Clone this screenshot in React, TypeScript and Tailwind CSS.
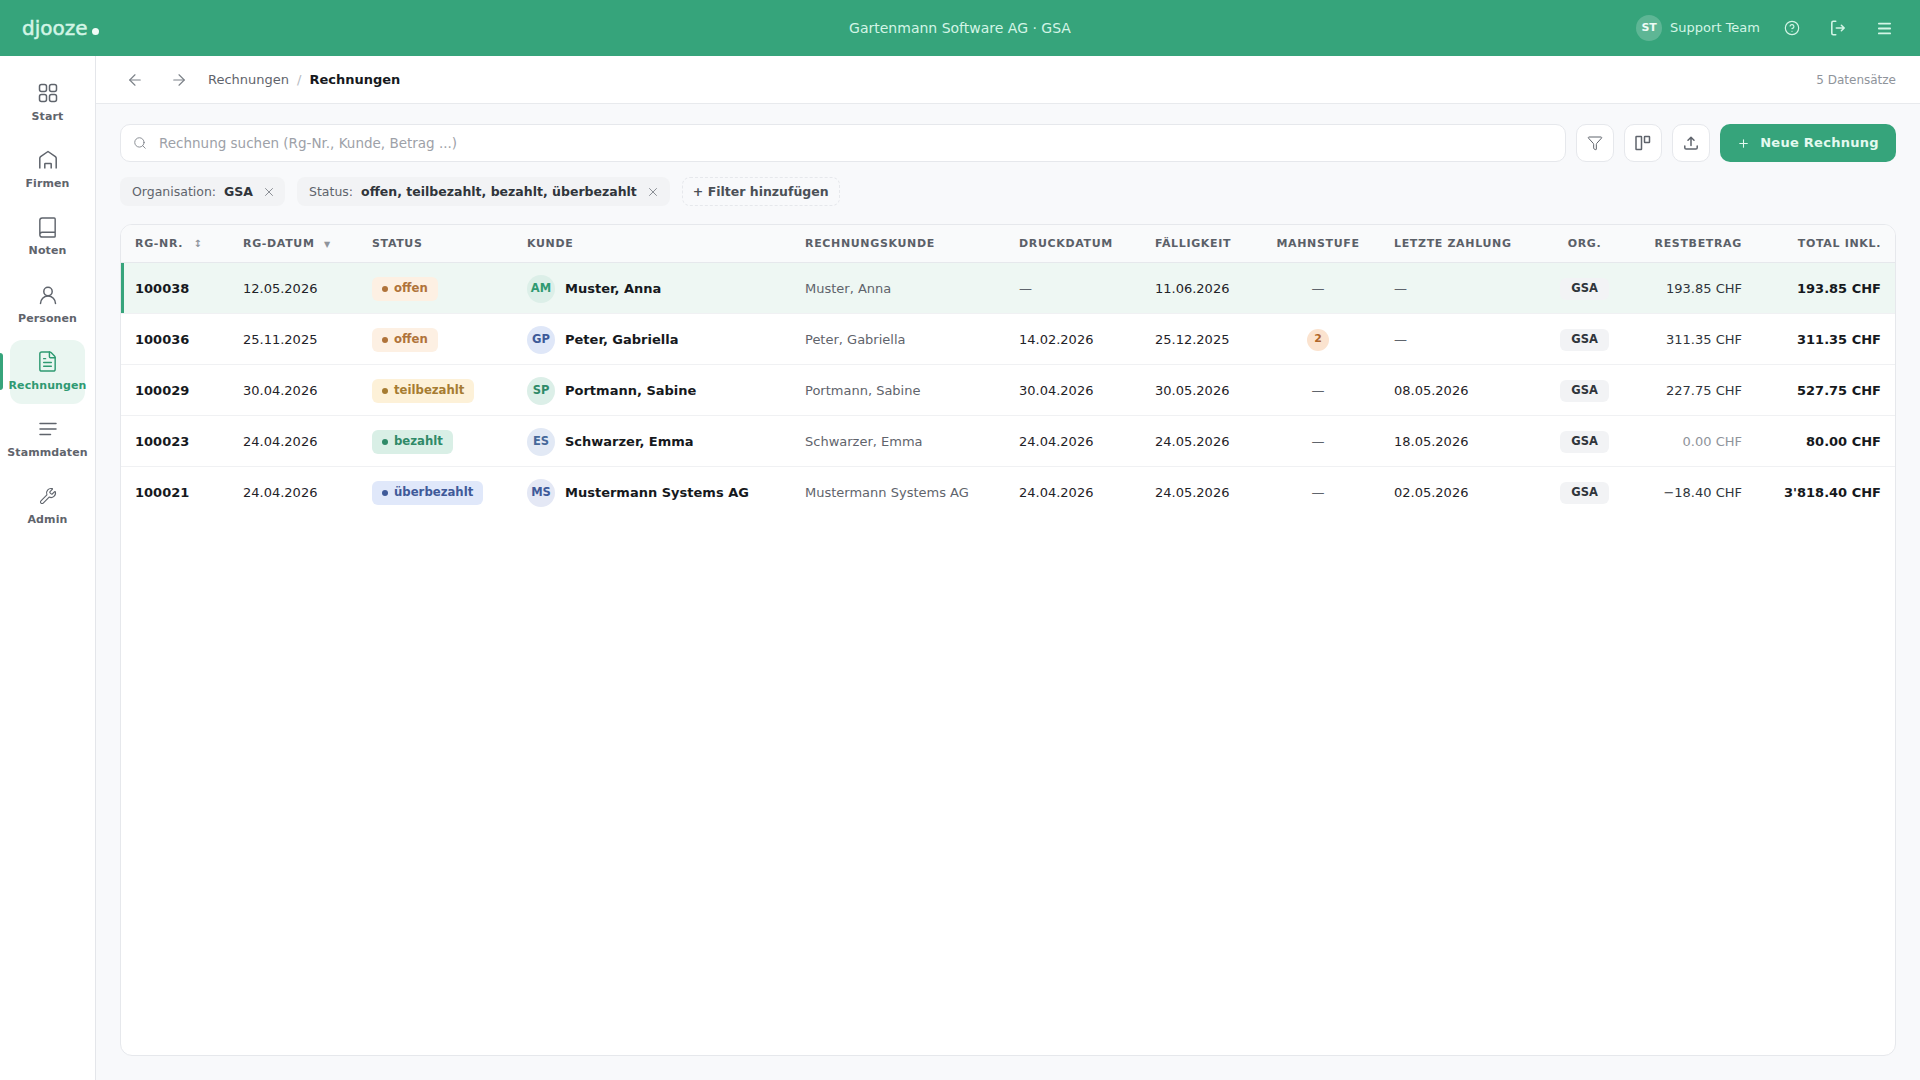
import { ArrowLeft, ArrowRight, Book, CircleHelp, FileText, Funnel, Menu, Plus, Search, Wrench, X } from "lucide-react";

const font = "[font-family:'DejaVu_Sans',sans-serif]";

const rows = [
    { nr: '100038', datum: '12.05.2026', status: 'offen', initials: 'AM', avatar: 'bg-[#dcefe8] text-[#2f9a72]', kunde: 'Muster, Anna', druck: '—', faellig: '11.06.2026', mahn: '', zahlung: '—', rest: '193.85 CHF', total: '193.85 CHF' },
    { nr: '100036', datum: '25.11.2025', status: 'offen', initials: 'GP', avatar: 'bg-[#dfe7f8] text-[#3d5a99]', kunde: 'Peter, Gabriella', druck: '14.02.2026', faellig: '25.12.2025', mahn: '2', zahlung: '—', rest: '311.35 CHF', total: '311.35 CHF' },
    { nr: '100029', datum: '30.04.2026', status: 'teilbezahlt', initials: 'SP', avatar: 'bg-[#dcefe8] text-[#2f8a68]', kunde: 'Portmann, Sabine', druck: '30.04.2026', faellig: '30.05.2026', mahn: '', zahlung: '08.05.2026', rest: '227.75 CHF', total: '527.75 CHF' },
    { nr: '100023', datum: '24.04.2026', status: 'bezahlt', initials: 'ES', avatar: 'bg-[#e2e9f5] text-[#46689a]', kunde: 'Schwarzer, Emma', druck: '24.04.2026', faellig: '24.05.2026', mahn: '', zahlung: '18.05.2026', rest: '0.00 CHF', total: '80.00 CHF' },
    { nr: '100021', datum: '24.04.2026', status: 'überbezahlt', initials: 'MS', avatar: 'bg-[#e4e8f5] text-[#3f5a99]', kunde: 'Mustermann Systems AG', druck: '24.04.2026', faellig: '24.05.2026', mahn: '', zahlung: '02.05.2026', rest: '−18.40 CHF', total: "3'818.40 CHF" },
];

const statusStyles: Record<string, { pill: string; dot: string }> = {
    offen: { pill: 'bg-[#fdf0e3] text-[#b0733a]', dot: 'bg-[#b0733a]' },
    teilbezahlt: { pill: 'bg-[#fdf1d8] text-[#a67c32]', dot: 'bg-[#a67c32]' },
    bezahlt: { pill: 'bg-[#d9efe6] text-[#2f8a68]', dot: 'bg-[#2f8a68]' },
    überbezahlt: { pill: 'bg-[#e0e8fa] text-[#3f5a99]', dot: 'bg-[#3f5a99]' },
};

function GridIcon() {
    return (
        <svg width="22" height="22" viewBox="0 0 22 22" fill="none" stroke="currentColor" strokeWidth="1.5">
            <rect x="2.5" y="2.5" width="7" height="7" rx="2" />
            <rect x="12.5" y="2.5" width="7" height="7" rx="2" />
            <rect x="2.5" y="12.5" width="7" height="7" rx="2" />
            <rect x="12.5" y="12.5" width="7" height="7" rx="2" />
        </svg>
    );
}

function HouseIcon() {
    return (
        <svg width="22" height="22" viewBox="0 0 22 22" fill="none" stroke="currentColor" strokeWidth="1.5" strokeLinejoin="round">
            <path d="M2.8 19.5V9.2c0-.6.3-1.1.8-1.5L11 2.5l7.4 5.2c.5.4.8.9.8 1.5v10.3" />
            <path d="M7.8 19.5V15c0-.3.2-.5.5-.5h5.4c.3 0 .5.2.5.5v4.5" />
        </svg>
    );
}

function PersonIcon() {
    return (
        <svg width="22" height="22" viewBox="0 0 22 22" fill="none" stroke="currentColor" strokeWidth="1.5" strokeLinecap="round">
            <circle cx="11" cy="7.5" r="4.2" />
            <path d="M3.5 19.5c0-4.200 3.300-7.500 7.500-7.500s7.500 3.300 7.500 7.500" />
        </svg>
    );
}

function LinesIcon() {
    return (
        <svg width="22" height="22" viewBox="0 0 22 22" fill="none" stroke="currentColor" strokeWidth="1.5" strokeLinecap="round">
            <path d="M3 5.5h16M3 11h16M3 16.5h10.5" />
        </svg>
    );
}

function ColumnsIcon() {
    return (
        <svg width="18" height="18" viewBox="0 0 18 18" fill="none" stroke="currentColor" strokeWidth="1.5">
            <rect x="2" y="2.5" width="5.5" height="13" rx=".5" />
            <rect x="10.5" y="2.5" width="5" height="6" rx=".5" />
        </svg>
    );
}

function UploadIcon() {
    return (
        <svg width="16" height="16" viewBox="0 0 16 16" fill="none" stroke="currentColor" strokeWidth="1.5" strokeLinecap="round" strokeLinejoin="round">
            <path d="M8 10.5V2.5M5 5.2l3-2.900 3 2.900" />
            <path d="M1.8 11v1.700c0 .8.5 1.300 1.300 1.300h9.800c.8 0 1.300-.5 1.300-1.300V11" />
        </svg>
    );
}

function LogoutIcon() {
    return (
        <svg width="18" height="18" viewBox="0 0 16 16" fill="none" stroke="currentColor" strokeWidth="1.4" strokeLinecap="round" strokeLinejoin="round">
            <path d="M6 2H3.800C3 2 2.500 2.500 2.500 3.300v9.400c0 .8.500 1.300 1.300 1.300H6" />
            <path d="M6.500 8h7M11 5.600 13.500 8 11 10.400" />
        </svg>
    );
}

const navItems = [
    { label: 'Start', icon: <GridIcon /> },
    { label: 'Firmen', icon: <HouseIcon /> },
    { label: 'Noten', icon: <Book size={23} strokeWidth={1.5} /> },
    { label: 'Personen', icon: <PersonIcon /> },
    { label: 'Rechnungen', icon: <FileText size={23} strokeWidth={1.5} />, active: true },
    { label: 'Stammdaten', icon: <LinesIcon /> },
    { label: 'Admin', icon: <Wrench size={18} strokeWidth={1.5} /> },
];

const th = "px-[14px] pt-[2px] text-[11px] font-bold uppercase tracking-[0.06em] text-[#5b6068] whitespace-nowrap";
const td = "px-[14px] pt-[2px] whitespace-nowrap";

export default function App() {
    return (
        <div className={`${font} flex h-[1080px] w-[1920px] flex-col overflow-hidden bg-[#f8f9fb] text-[13px] text-[#1f2328]`}>
            <header className="flex h-[56px] shrink-0 items-center justify-between bg-[#36a47b] pl-[22px] pr-[27px] text-[#d3f5e6]">
                <div className="flex w-[400px] items-baseline text-[20px] leading-none [-webkit-text-stroke:0.5px_#d3f5e6]">
                    djooze<span className="ml-[4px] inline-block h-[7px] w-[7px] rounded-full bg-[#f2fbf7]"></span>
                </div>
                <div className="text-[14px]">Gartenmann Software AG · GSA</div>
                <div className="flex w-[395px] items-center justify-end">
                    <span className="flex h-[26px] w-[26px] items-center justify-center rounded-full bg-white/20 text-[11px] font-bold text-[#eefbf5]">ST</span>
                    <span className="ml-2 text-[13px]">Support Team</span>
                    <CircleHelp size={16} strokeWidth={1.75} className="ml-[24px]" />
                    <span className="ml-[29px]"><LogoutIcon /></span>
                    <Menu size={17} strokeWidth={2.5} className="ml-[29px]" />
                </div>
            </header>

            <div className="flex min-h-0 flex-1">
                <nav className="flex w-[96px] shrink-0 flex-col items-center border-r border-[#e4e6ea] bg-white pt-[15px] text-[#5f646c]">
                    {navItems.map((item) => (
                        <div key={item.label} className="relative flex h-[67.2px] w-full justify-center">
                            {item.active && <span className="absolute left-0 top-[13px] h-[37px] w-[3px] rounded-r-[3px] bg-[#36a47b]"></span>}
                            <div className={`flex h-[64px] w-[75px] flex-col items-center justify-center gap-[6px] rounded-[12px] ${item.active ? 'bg-[#eaf6f1] text-[#2f9a72]' : ''}`}>
                                <span className="flex h-[22px] items-center">{item.icon}</span>
                                <span className="text-[11px] font-bold leading-[14px] tracking-[0.01em] whitespace-nowrap">{item.label}</span>
                            </div>
                        </div>
                    ))}
                </nav>

                <main className="flex min-w-0 flex-1 flex-col">
                    <div className="flex h-[48px] shrink-0 items-center justify-between border-b border-[#e8eaed] bg-white pl-[30px] pr-[24px]">
                        <div className="flex items-center">
                            <ArrowLeft size={18} strokeWidth={1.5} className="text-[#7b8087]" />
                            <ArrowRight size={18} strokeWidth={1.5} className="ml-[26px] text-[#7b8087]" />
                            <span className="ml-[20px] text-[#5f646c]">Rechnungen</span>
                            <span className="mx-[8px] text-[#b5b9bf]">/</span>
                            <span className="font-bold text-[#16191d]">Rechnungen</span>
                        </div>
                        <span className="text-[12px] text-[#8f949b]">5 Datensätze</span>
                    </div>

                    <div className="flex min-h-0 flex-1 flex-col px-[24px] pb-[24px] pt-[20px]">
                        <div className="flex h-[38px] shrink-0 items-center gap-[10px]">
                            <div className="flex h-full flex-1 items-center rounded-[10px] border border-[#e6e8ec] bg-white pl-[12px] text-[13.5px] text-[#9da1a8]">
                                <Search size={14} strokeWidth={1.5} className="text-[#7b8087]" />
                                <span className="ml-[12px]">Rechnung suchen (Rg-Nr., Kunde, Betrag ...)</span>
                            </div>
                            <button className="flex h-[38px] w-[38px] items-center justify-center rounded-[10px] border border-[#e6e8ec] bg-white text-[#5f646c]"><Funnel size={16} strokeWidth={1.5} /></button>
                            <button className="flex h-[38px] w-[38px] items-center justify-center rounded-[10px] border border-[#e6e8ec] bg-white text-[#5f646c]"><ColumnsIcon /></button>
                            <button className="flex h-[38px] w-[38px] items-center justify-center rounded-[10px] border border-[#e6e8ec] bg-white text-[#5f646c]"><UploadIcon /></button>
                            <button className="flex h-[38px] w-[176px] items-center justify-center rounded-[10px] bg-[#36a47b] font-bold tracking-[0.02em] text-[#e3f9ef]">
                                <Plus size={13} strokeWidth={2} />
                                <span className="ml-[10px]">Neue Rechnung</span>
                            </button>
                        </div>

                        <div className="mt-[15px] flex h-[29px] shrink-0 items-center gap-[12px] text-[12.5px]">
                            <div className="flex h-full items-center rounded-[8px] bg-[#f2f3f5] pb-[0px] pl-[12px] pr-[9px] pt-[1px]">
                                <span className="text-[#5f646c]">Organisation:</span>
                                <span className="ml-[8px] font-bold text-[#30353b]">GSA</span>
                                <X size={14} strokeWidth={1.5} className="ml-[9px] text-[#7b8087]" />
                            </div>
                            <div className="flex h-full items-center rounded-[8px] bg-[#f2f3f5] pl-[12px] pr-[10px] pt-[1px]">
                                <span className="text-[#5f646c]">Status:</span>
                                <span className="ml-[8px] font-bold text-[#30353b]">offen, teilbezahlt, bezahlt, überbezahlt</span>
                                <X size={14} strokeWidth={1.5} className="ml-[9px] text-[#7b8087]" />
                            </div>
                            <div className="flex h-full items-center rounded-[8px] border border-dashed border-[#e6e8ec] px-[10px] pt-[1px] font-bold text-[#4b5057]">+ Filter hinzufügen</div>
                        </div>

                        <div className="mt-[18px] min-h-0 flex-1 overflow-hidden rounded-[12px] border border-[#e6e8ec] bg-white">
                            <table className="w-full table-fixed border-collapse">
                                <colgroup>
                                    <col className="w-[108px]" />
                                    <col className="w-[129px]" />
                                    <col className="w-[155px]" />
                                    <col className="w-[278px]" />
                                    <col className="w-[214px]" />
                                    <col className="w-[136px]" />
                                    <col className="w-[115px]" />
                                    <col className="w-[124px]" />
                                    <col className="w-[160px]" />
                                    <col className="w-[89px]" />
                                    <col className="w-[127px]" />
                                    <col />
                                </colgroup>
                                <thead>
                                    <tr className="h-[37px] border-b border-[#e6e8ec] bg-[#f9fafb]">
                                        <th className={`${th} text-left`}>RG-Nr. <span className="ml-[6px] text-[10px] text-[#8f949b]">↕</span></th>
                                        <th className={`${th} text-left`}>RG-Datum <span className="ml-[5px] text-[8px] text-[#8f949b]">▼</span></th>
                                        <th className={`${th} text-left`}>Status</th>
                                        <th className={`${th} text-left`}>Kunde</th>
                                        <th className={`${th} text-left`}>Rechnungskunde</th>
                                        <th className={`${th} text-left`}>Druckdatum</th>
                                        <th className={`${th} text-left`}>Fälligkeit</th>
                                        <th className={`${th} text-center`}>Mahnstufe</th>
                                        <th className={`${th} text-left`}>Letzte Zahlung</th>
                                        <th className={`${th} text-center`}>Org.</th>
                                        <th className={`${th} text-right`}>Restbetrag</th>
                                        <th className={`${th} text-right`}>Total inkl.</th>
                                    </tr>
                                </thead>
                                <tbody>
                                    {rows.map((row, i) => (
                                        <tr key={row.nr} className={`h-[51px] ${i === 0 ? 'bg-[#eef7f3]' : 'border-t border-[#f0f1f3]'}`}>
                                            <td className={`${td} font-bold text-[#16191d] ${i === 0 ? 'shadow-[inset_3px_0_0_#36a47b]' : ''}`}>{row.nr}</td>
                                            <td className={td}>{row.datum}</td>
                                            <td className={td}>
                                                <span className={`inline-flex h-[24px] items-center gap-[6px] rounded-[6px] pl-[10px] pr-[10px] align-middle text-[11.7px] font-bold ${statusStyles[row.status].pill}`}>
                                                    <span className={`h-[6px] w-[6px] rounded-full ${statusStyles[row.status].dot}`}></span>
                                                    {row.status}
                                                </span>
                                            </td>
                                            <td className={td}>
                                                <div className="flex items-center gap-[10px]">
                                                    <span className={`flex h-[28px] w-[28px] items-center justify-center rounded-full text-[11.5px] font-bold ${row.avatar}`}>{row.initials}</span>
                                                    <span className="font-bold text-[#16191d]">{row.kunde}</span>
                                                </div>
                                            </td>
                                            <td className={`${td} text-[#5f646c]`}>{row.kunde}</td>
                                            <td className={`${td} ${row.druck === '—' ? 'text-[#5f646c]' : ''}`}>{row.druck}</td>
                                            <td className={td}>{row.faellig}</td>
                                            <td className={`${td} text-center text-[#5f646c]`}>
                                                {row.mahn ? (
                                                    <span className="inline-flex h-[22px] w-[22px] items-center justify-center rounded-full bg-[#fbe3cf] align-middle text-[11px] font-bold text-[#b0662a]">{row.mahn}</span>
                                                ) : '—'}
                                            </td>
                                            <td className={`${td} ${row.zahlung === '—' ? 'text-[#5f646c]' : ''}`}>{row.zahlung}</td>
                                            <td className={`${td} text-center`}>
                                                <span className="inline-flex h-[22px] w-[49px] items-center justify-center rounded-[6px] bg-[#f2f3f5] align-middle text-[11.5px] font-bold text-[#30353b]">GSA</span>
                                            </td>
                                            <td className={`${td} text-right ${row.rest === '0.00 CHF' ? 'text-[#8f949b]' : 'text-[#30353b]'}`}>{row.rest}</td>
                                            <td className={`${td} text-right font-bold text-[#16191d]`}>{row.total}</td>
                                        </tr>
                                    ))}
                                </tbody>
                            </table>
                        </div>
                    </div>
                </main>
            </div>
        </div>
    );
}
